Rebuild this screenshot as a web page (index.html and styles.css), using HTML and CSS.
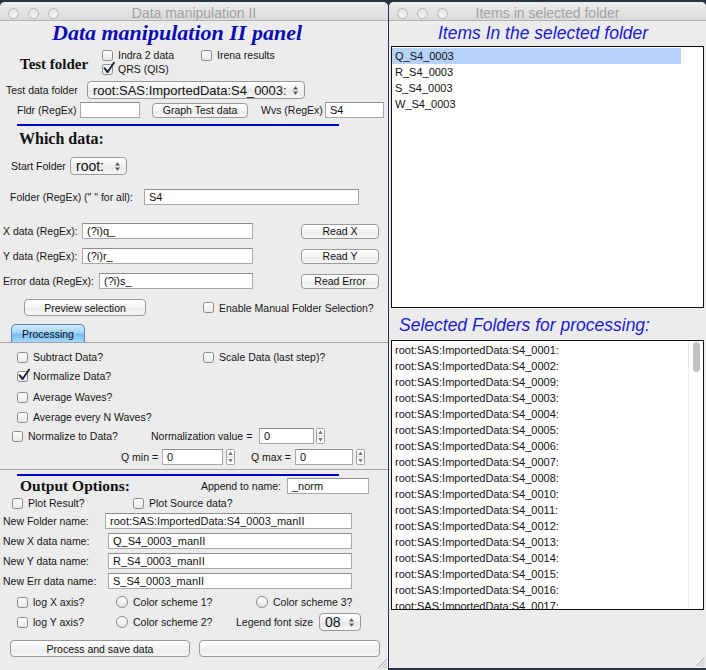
FILE: index.html
```html
<!DOCTYPE html>
<html lang="en">
<head>
<meta charset="utf-8">
<title>Data manipulation II</title>
<link rel="stylesheet" href="styles.css">
</head>
<body>
<div class="desktop">
  <section class="win win-left">
    <header class="titlebar">
      <div class="lights"><span class="light"></span><span class="light"></span><span class="light"></span></div>
      <div class="wtitle">Data manipulation II</div>
      <div></div>
    </header>
    <div class="panel">
      <div class="row r-head"><h1 class="panel-title">Data manipulation II panel</h1></div>

      <div class="row r-test">
        <div class="sect sect-test">Test folder</div>
        <div class="cb-col">
          <div class="cb-line">
            <span class="cb cb-indra"><span class="box"></span>Indra 2 data</span>
            <span class="cb"><span class="box"></span>Irena results</span>
          </div>
          <div class="cb-line">
            <span class="cb"><span class="box"><svg class="tick" viewBox="0 0 14 14" width="14" height="14"><path d="M2.5 7.2 L5.6 11 L12 1.8" fill="none" stroke="#1e2638" stroke-width="2" stroke-linecap="round" stroke-linejoin="round"/></svg></span>QRS (QIS)</span>
          </div>
        </div>
      </div>

      <div class="row r-testdata">
        <span class="lbl lbl-testdata">Test data folder</span>
        <div class="popup popup-test"><span>root:SAS:ImportedData:S4_0003:</span><svg class="arrows" width="5" height="9" viewBox="0 0 5 9"><path d="M0 3.5 L2.5 0.3 L5 3.5Z M0 5.5 L2.5 8.7 L5 5.5Z" fill="#555"/></svg></div>
      </div>

      <div class="row r-fldr">
        <span class="lbl lbl-fldr">Fldr (RegEx)</span>
        <div class="field in-fldr"></div>
        <div class="btn btn-graph">Graph Test data</div>
        <span class="lbl lbl-wvs">Wvs (RegEx)</span>
        <div class="field in-wvs">S4</div>
      </div>

      <div class="sep sep-1"></div>

      <div class="row r-which"><div class="sect sect-which">Which data:</div></div>

      <div class="row r-start">
        <span class="lbl lbl-start">Start Folder</span>
        <div class="popup popup-start"><span>root:</span><svg class="arrows" width="5" height="9" viewBox="0 0 5 9"><path d="M0 3.5 L2.5 0.3 L5 3.5Z M0 5.5 L2.5 8.7 L5 5.5Z" fill="#555"/></svg></div>
      </div>

      <div class="row r-folder">
        <span class="lbl lbl-folder">Folder (RegEx) (" " for all):</span>
        <div class="field in-folder">S4</div>
      </div>

      <div class="row r-x">
        <span class="lbl lbl-xy">X data (RegEx):</span>
        <div class="field in-xy">(?i)q_</div>
        <div class="btn btn-read">Read X</div>
      </div>

      <div class="row r-y">
        <span class="lbl lbl-xy">Y data (RegEx):</span>
        <div class="field in-xy">(?i)r_</div>
        <div class="btn btn-read">Read Y</div>
      </div>

      <div class="row r-err">
        <span class="lbl lbl-err">Error data (RegEx):</span>
        <div class="field in-err">(?i)s_</div>
        <div class="btn btn-read">Read Error</div>
      </div>

      <div class="row r-preview">
        <div class="btn btn-preview">Preview selection</div>
        <span class="cb cb-enable"><span class="box"></span>Enable Manual Folder Selection?</span>
      </div>

      <div class="tabstrip"><div class="tab">Processing</div></div>

      <div class="tabpanel">
        <div class="row r-subtract">
          <span class="cb cb-subtract"><span class="box"></span>Subtract Data?</span>
          <span class="cb"><span class="box"></span>Scale Data (last step)?</span>
        </div>
        <div class="row r-normalize">
          <span class="cb"><span class="box"><svg class="tick" viewBox="0 0 14 14" width="14" height="14"><path d="M2.5 7.2 L5.6 11 L12 1.8" fill="none" stroke="#1e2638" stroke-width="2" stroke-linecap="round" stroke-linejoin="round"/></svg></span>Normalize Data?</span>
        </div>
        <div class="row r-avgw">
          <span class="cb"><span class="box"></span>Average Waves?</span>
        </div>
        <div class="row r-avgn">
          <span class="cb"><span class="box"></span>Average every N Waves?</span>
        </div>
        <div class="row r-ntd">
          <span class="cb cb-ntd"><span class="box"></span>Normalize to Data?</span>
          <span class="lbl lbl-normval">Normalization value =</span>
          <div class="field in-normval">0</div>
          <svg class="stepper" width="9" height="16" viewBox="0 0 9 16"><rect x="0.5" y="0.5" width="8" height="15" rx="1" fill="#fff" stroke="#a3a3a3"/><line x1="1" y1="8" x2="8" y2="8" stroke="#cfcfcf"/><path d="M2.2 6 L4.5 2.6 L6.8 6Z M2.2 10 L4.5 13.4 L6.8 10Z" fill="#7a7a7a"/></svg>
        </div>
        <div class="row r-q">
          <span class="lbl lbl-qmin">Q min =</span>
          <div class="field in-qmin">0</div>
          <svg class="stepper" width="9" height="16" viewBox="0 0 9 16"><rect x="0.5" y="0.5" width="8" height="15" rx="1" fill="#fff" stroke="#a3a3a3"/><line x1="1" y1="8" x2="8" y2="8" stroke="#cfcfcf"/><path d="M2.2 6 L4.5 2.6 L6.8 6Z M2.2 10 L4.5 13.4 L6.8 10Z" fill="#7a7a7a"/></svg>
          <span class="lbl lbl-qmax">Q max =</span>
          <div class="field in-qmax">0</div>
          <svg class="stepper" width="9" height="16" viewBox="0 0 9 16"><rect x="0.5" y="0.5" width="8" height="15" rx="1" fill="#fff" stroke="#a3a3a3"/><line x1="1" y1="8" x2="8" y2="8" stroke="#cfcfcf"/><path d="M2.2 6 L4.5 2.6 L6.8 6Z M2.2 10 L4.5 13.4 L6.8 10Z" fill="#7a7a7a"/></svg>
        </div>
      </div>

      <div class="sep sep-2"></div>

      <div class="row r-output">
        <div class="sect sect-output">Output Options:</div>
        <span class="lbl lbl-append">Append to name:</span>
        <div class="field in-append">_norm</div>
      </div>

      <div class="row r-plot">
        <span class="cb cb-plot"><span class="box"></span>Plot Result?</span>
        <span class="cb"><span class="box"></span>Plot Source data?</span>
      </div>

      <div class="row r-newf">
        <span class="lbl lbl-newf">New Folder name:</span>
        <div class="field in-newf">root:SAS:ImportedData:S4_0003_manII</div>
      </div>
      <div class="row r-newx">
        <span class="lbl lbl-new">New X data name:</span>
        <div class="field in-new">Q_S4_0003_manII</div>
      </div>
      <div class="row r-newy">
        <span class="lbl lbl-new">New Y data name:</span>
        <div class="field in-new">R_S4_0003_manII</div>
      </div>
      <div class="row r-newe">
        <span class="lbl lbl-new">New Err data name:</span>
        <div class="field in-new">S_S4_0003_manII</div>
      </div>

      <div class="row r-logx">
        <span class="cb cb-log"><span class="box"></span>log X axis?</span>
        <span class="rb rb-1"><span class="radio"></span>Color scheme 1?</span>
        <span class="rb"><span class="radio"></span>Color scheme 3?</span>
      </div>
      <div class="row r-logy">
        <span class="cb cb-log"><span class="box"></span>log Y axis?</span>
        <span class="rb rb-2"><span class="radio"></span>Color scheme 2?</span>
        <span class="lbl lbl-legend">Legend font size</span>
        <div class="popup popup-legend"><span>08</span><svg class="arrows" width="5" height="9" viewBox="0 0 5 9"><path d="M0 3.5 L2.5 0.3 L5 3.5Z M0 5.5 L2.5 8.7 L5 5.5Z" fill="#555"/></svg></div>
      </div>

      <div class="row r-buttons">
        <div class="btn btn-process">Process and save data</div>
        <div class="btn btn-blank"></div>
      </div>
    </div>
    <svg class="grip" width="12" height="12" viewBox="0 0 12 12"><path d="M11.5 2.5 L2.5 11.5 M11.5 6 L6 11.5 M11.5 9.5 L9.5 11.5" stroke="#a8a8a8" stroke-width="1"/></svg>
  </section>

  <section class="win win-right">
    <header class="titlebar">
      <div class="lights"><span class="light"></span><span class="light"></span><span class="light"></span></div>
      <div class="wtitle">Items in selected folder</div>
      <div></div>
    </header>
    <div class="rpanel">
      <div class="rhead rhead-1">Items In the selected folder</div>
      <div class="listbox list-items">
        <div class="list-rows rows-items">
          <div class="lrow sel">Q_S4_0003</div>
          <div class="lrow">R_S4_0003</div>
          <div class="lrow">S_S4_0003</div>
          <div class="lrow">W_S4_0003</div>
        </div>
        <div class="track track-plain"></div>
      </div>
      <div class="rhead rhead-2">Selected Folders for processing:</div>
      <div class="listbox list-folders">
        <div class="list-rows rows-folders">
          <div class="lrow">root:SAS:ImportedData:S4_0001:</div>
          <div class="lrow">root:SAS:ImportedData:S4_0002:</div>
          <div class="lrow">root:SAS:ImportedData:S4_0009:</div>
          <div class="lrow">root:SAS:ImportedData:S4_0003:</div>
          <div class="lrow">root:SAS:ImportedData:S4_0004:</div>
          <div class="lrow">root:SAS:ImportedData:S4_0005:</div>
          <div class="lrow">root:SAS:ImportedData:S4_0006:</div>
          <div class="lrow">root:SAS:ImportedData:S4_0007:</div>
          <div class="lrow">root:SAS:ImportedData:S4_0008:</div>
          <div class="lrow">root:SAS:ImportedData:S4_0010:</div>
          <div class="lrow">root:SAS:ImportedData:S4_0011:</div>
          <div class="lrow">root:SAS:ImportedData:S4_0012:</div>
          <div class="lrow">root:SAS:ImportedData:S4_0013:</div>
          <div class="lrow">root:SAS:ImportedData:S4_0014:</div>
          <div class="lrow">root:SAS:ImportedData:S4_0015:</div>
          <div class="lrow">root:SAS:ImportedData:S4_0016:</div>
          <div class="lrow">root:SAS:ImportedData:S4_0017:</div>
        </div>
        <div class="track track-scroll"><div class="thumb"></div></div>
      </div>
    </div>
    <svg class="grip" width="12" height="12" viewBox="0 0 12 12"><path d="M11.5 2.5 L2.5 11.5 M11.5 6 L6 11.5 M11.5 9.5 L9.5 11.5" stroke="#a8a8a8" stroke-width="1"/></svg>
  </section>
</div>
</body>
</html>
```

FILE: styles.css
```css
* { box-sizing: border-box; }
html, body { margin: 0; padding: 0; }
body {
  width: 706px;
  height: 670px;
  overflow: hidden;
  background: #2a3244;
  font-family: "Liberation Sans", Arial, sans-serif;
  font-size: 10.5px;
  color: #161616;
}
.desktop {
  display: flex;
  align-items: flex-start;
  gap: 1px;
  padding-top: 2px;
  height: 670px;
}
.win {
  position: relative;
  display: flex;
  flex-direction: column;
  background: #ececec;
  border-radius: 5px 5px 0 0;
}
.win-left { width: 388px; height: 668px; }
.win-right { width: 317px; height: 666px; }

/* title bar */
.titlebar {
  height: 19px;
  display: grid;
  grid-template-columns: 1fr auto 1fr;
  align-items: center;
  background: linear-gradient(#eeeeee, #dadada);
  border-bottom: 1px solid #b2b2b2;
  border-radius: 5px 5px 0 0;
  flex: none;
}
.lights { display: flex; gap: 9px; padding-left: 8px; margin-top: 3px; }
.light {
  width: 11px; height: 11px; border-radius: 50%;
  border: 1px solid #b6b6b6;
  background: linear-gradient(#e4e4e4, #f2f2f2);
}
.wtitle { font-size: 14px; color: #a2a2a2; margin-top: 3px; white-space: nowrap; }

/* left panel */
.panel { display: flex; flex-direction: column; flex: 1; }
.row { display: flex; align-items: center; flex: none; white-space: nowrap; }
.lbl { flex: none; }

.r-head { height: 24px; padding-left: 52px; }
.panel-title {
  margin: 0;
  font-family: "Liberation Serif", "Times New Roman", serif;
  font-weight: bold; font-style: italic;
  font-size: 22px; line-height: 24px;
  color: #0c0cb4;
}
.sect {
  font-family: "Liberation Serif", "Times New Roman", serif;
  font-weight: bold;
  color: #111;
}
.r-test { height: 32px; align-items: flex-start; padding-left: 20px; }
.sect-test { width: 82px; font-size: 15px; line-height: 18px; margin-top: 10px; }
.cb-col { display: flex; flex-direction: column; padding-top: 3px; }
.cb-line { display: flex; align-items: center; height: 14px; }
.cb-indra { width: 99px; }

.cb, .rb { display: flex; align-items: center; flex: none; }
.box {
  position: relative;
  width: 11px; height: 11px; flex: none;
  margin-right: 5px;
  border: 1px solid #8c8c8c;
  border-radius: 2.5px;
  background: linear-gradient(#ffffff, #e9e9e9);
}
.tick { position: absolute; left: -1px; top: -4px; overflow: visible; }
.radio {
  width: 12px; height: 12px; flex: none;
  margin-right: 5px;
  border: 1px solid #8c8c8c;
  border-radius: 50%;
  background: linear-gradient(#ffffff, #e6e6e6);
}

.field {
  flex: none;
  height: 16px;
  background: #fff;
  border: 1px solid #a9a9a9;
  border-top-color: #8d8d8d;
  font-size: 11px;
  line-height: 14px;
  padding-left: 4px;
  overflow: hidden;
  color: #111;
}
.btn {
  flex: none;
  height: 15px;
  display: flex; align-items: center; justify-content: center;
  border: 1px solid #9a9a9a;
  border-radius: 4px;
  background: linear-gradient(#ffffff, #f4f4f4 50%, #ebebeb 52%, #f6f6f6);
  font-size: 10.5px;
  color: #111;
}
.popup {
  flex: none;
  height: 18px;
  display: flex; align-items: center;
  padding-left: 5px;
  border: 1px solid #9a9a9a;
  border-radius: 4px;
  background: linear-gradient(#ffffff, #f0f0f0 50%, #e8e8e8 52%, #f7f7f7);
  color: #111;
}
.popup .arrows { margin-left: auto; margin-right: 6px; flex: none; }
.stepper { flex: none; display: block; }

.r-testdata { height: 18px; margin-top: 4px; padding-left: 6px; }
.lbl-testdata { width: 81px; }
.popup-test { width: 218px; font-size: 13px; }

.r-fldr { height: 18px; margin-top: 2px; padding-left: 17px; }
.lbl-fldr { width: 63px; }
.in-fldr { width: 60px; }
.btn-graph { margin-left: 12px; width: 96px; }
.lbl-wvs { margin-left: 13px; width: 64px; }
.in-wvs { width: 59px; }

.sep { flex: none; height: 2px; width: 322px; margin-left: 17px; background: #0000c0; }
.sep-1 { margin-top: 5px; }
.sep-2 { margin-top: 4px; }

.r-which { height: 18px; margin-top: 4px; padding-left: 19px; }
.sect-which { font-size: 16px; line-height: 18px; }

.r-start { height: 18px; margin-top: 9px; padding-left: 11px; }
.lbl-start { width: 59px; }
.popup-start { width: 57px; font-size: 14px; }

.r-folder { height: 16px; margin-top: 14px; padding-left: 10px; }
.lbl-folder { width: 134px; }
.in-folder { width: 215px; }

.r-x { height: 16px; margin-top: 18px; padding-left: 3px; }
.r-y, .r-err { height: 16px; margin-top: 9px; padding-left: 3px; }
.lbl-xy { width: 79px; }
.in-xy { width: 171px; }
.lbl-err { width: 96px; }
.in-err { width: 154px; }
.btn-read { margin-left: 48px; width: 78px; }

.r-preview { height: 17px; margin-top: 10px; padding-left: 24px; }
.btn-preview { width: 122px; height: 17px; }
.cb-enable { margin-left: 57px; }

.tabstrip { flex: none; display: flex; height: 18px; margin-top: 8px; padding-left: 11px; }
.tab {
  width: 74px; height: 18px;
  display: flex; align-items: center; justify-content: center;
  border: 1px solid #5b83b4;
  border-bottom: none;
  border-radius: 5px 5px 0 0;
  background: linear-gradient(#d5ecfc, #9fd3f8 45%, #74bdf1 55%, #a6d8fb);
  font-size: 10.5px;
  color: #111;
}
.tabpanel {
  flex: none;
  display: flex; flex-direction: column;
  border-top: 1px solid #a3a3a3;
  border-bottom: 1px solid #a3a3a3;
  padding-bottom: 4px;
}
.r-subtract { height: 14px; margin-top: 7px; padding-left: 17px; }
.cb-subtract { width: 186px; }
.r-normalize { height: 14px; margin-top: 5px; padding-left: 17px; }
.r-avgw { height: 14px; margin-top: 7px; padding-left: 17px; }
.r-avgn { height: 14px; margin-top: 6px; padding-left: 17px; }
.r-ntd { height: 16px; margin-top: 4px; padding-left: 12px; }
.cb-ntd { width: 139px; }
.lbl-normval { width: 108px; }
.in-normval { width: 55px; }
.r-ntd .stepper { margin-left: 2px; }
.r-q { height: 16px; margin-top: 5px; padding-left: 121px; }
.lbl-qmin { width: 41px; }
.in-qmin { width: 61px; }
.r-q .stepper { margin-left: 3px; }
.lbl-qmax { margin-left: 16px; width: 44px; }
.in-qmax { width: 58px; }

.r-output { height: 16px; margin-top: 2px; padding-left: 20px; }
.sect-output { width: 181px; font-size: 15.5px; line-height: 16px; }
.lbl-append { width: 86px; }
.in-append { width: 82px; }

.r-plot { height: 14px; margin-top: 2px; padding-left: 12px; }
.cb-plot { width: 121px; }

.r-newf { height: 16px; margin-top: 3px; padding-left: 3px; }
.lbl-newf { width: 102px; }
.in-newf { width: 247px; }
.r-newx, .r-newy, .r-newe { height: 16px; margin-top: 4px; padding-left: 3px; }
.lbl-new { width: 105px; }
.in-new { width: 244px; }

.r-logx { height: 14px; margin-top: 6px; padding-left: 17px; }
.r-logy { height: 18px; margin-top: 4px; padding-left: 17px; }
.cb-log { width: 99px; }
.rb-1 { width: 140px; }
.rb-2 { width: 120px; }
.lbl-legend { width: 83px; }
.popup-legend { width: 42px; font-size: 14px; }

.r-buttons { height: 17px; margin-top: 9px; padding-left: 10px; }
.btn-process { width: 180px; height: 17px; }
.btn-blank { width: 181px; height: 17px; margin-left: 9px; }

.grip { position: absolute; right: 1px; bottom: 1px; }

/* right window */
.rpanel { display: flex; flex-direction: column; flex: 1; }
.rhead {
  flex: none;
  height: 24px;
  line-height: 24px;
  font-family: "Liberation Sans", Arial, sans-serif;
  font-style: italic;
  font-size: 17.5px;
  color: #1b1bd2;
  white-space: nowrap;
}
.rhead-1 { padding-left: 49px; }
.rhead-2 { padding-left: 10px; margin-top: 5px; }
.listbox {
  flex: none;
  display: flex;
  margin-left: 2px;
  width: 313px;
  background: #fff;
  border: 1px solid #111;
  overflow: hidden;
}
.list-items { height: 262px; margin-top: 1px; }
.list-folders { height: 270px; margin-top: 3px; }
.list-rows { display: flex; flex-direction: column; padding-top: 1px; }
.rows-items { width: 289px; }
.rows-folders { width: 296px; }
.lrow {
  flex: none;
  height: 16px;
  line-height: 16px;
  padding-left: 3px;
  font-size: 11px;
  color: #111;
  white-space: nowrap;
}
.lrow.sel { background: #b5d3fa; }
.track { flex: 1; }
.track-scroll { border-left: 1px solid #ededed; padding-left: 4px; padding-top: 1px; }
.thumb { width: 7px; height: 30px; border-radius: 4px; background: #c2c2c2; }
```
